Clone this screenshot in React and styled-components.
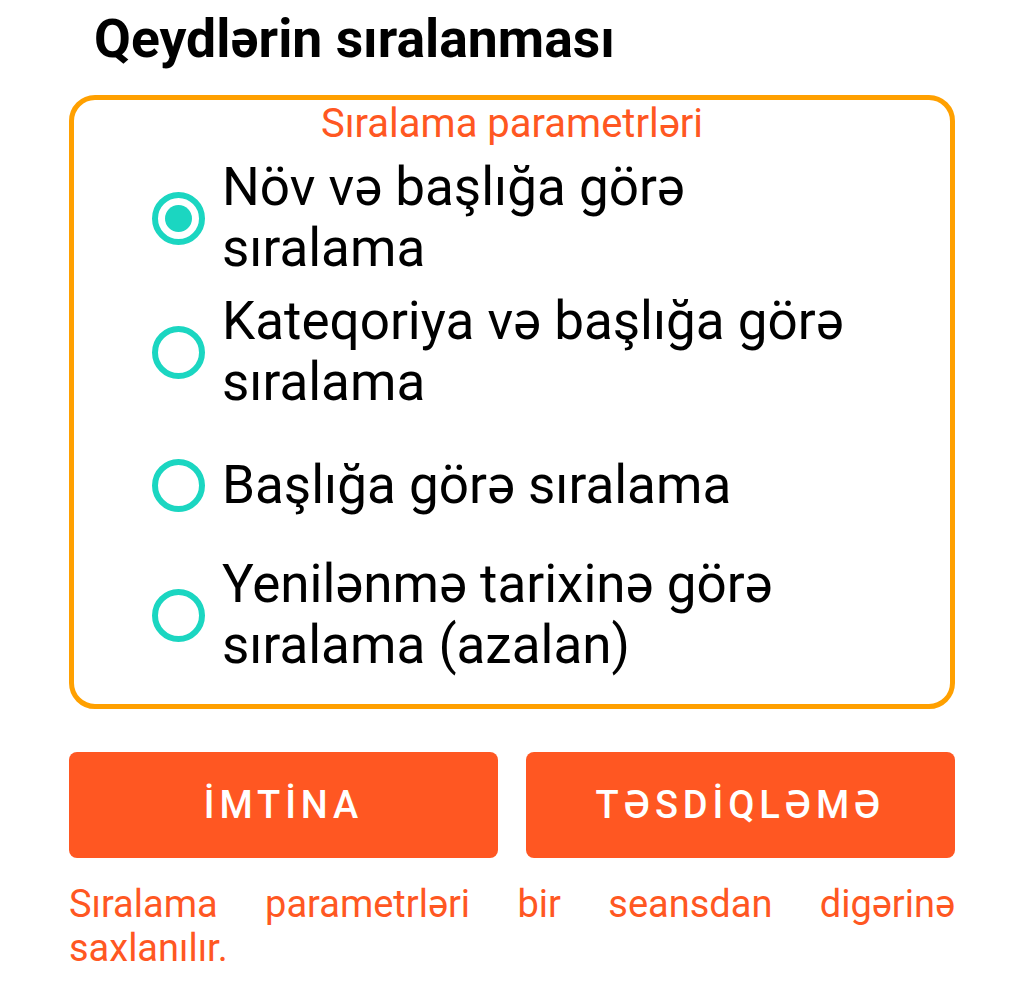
import React, { useState } from "react";
import styled, { createGlobalStyle } from "styled-components";

const Global = createGlobalStyle`
  html, body { margin: 0; padding: 0; background: #ffffff; }
  body { font-family: Roboto, "Noto Sans", sans-serif; }
  * { box-sizing: border-box; }
`;

const Page = styled.div`
  width: 1024px;
  padding: 8px 69px 0 69px;
  display: flex;
  flex-direction: column;
`;

const Title = styled.h1`
  margin: 0 0 26px 25px;
  font-family: Roboto, sans-serif;
  font-weight: 700;
  font-size: 53.5px;
  line-height: 61px;
  color: #000;
`;

const Panel = styled.div`
  border: 5px solid #ffa000;
  border-radius: 26px;
  padding: 1px 88px 25px 78px;
  display: flex;
  flex-direction: column;
`;

const Legend = styled.div`
  font-size: 40px;
  line-height: 46px;
  color: #ff5722;
  text-align: center;
  white-space: nowrap;
  margin: 0 -78px 4px -68px;
`;

const Options = styled.div`
  display: flex;
  flex-direction: column;
`;

const Row = styled.label`
  display: flex;
  align-items: center;
  gap: 17px;
  min-height: ${(p) => p.$h}px;
  cursor: pointer;
`;

const Radio = styled.span`
  flex: none;
  width: 53px;
  height: 53px;
  border-radius: 50%;
  border: 6.5px solid #1bd6c1;
  display: flex;
  align-items: center;
  justify-content: center;
  &::after {
    content: "";
    width: 27px;
    height: 27px;
    border-radius: 50%;
    background: #1bd6c1;
    display: ${(p) => (p.$checked ? "block" : "none")};
  }
`;

const OptionText = styled.span`
  font-size: 53px;
  line-height: 61px;
  color: #000;
`;

const Buttons = styled.div`
  display: grid;
  grid-template-columns: 1fr 1fr;
  gap: 28px;
  margin-top: 43px;
`;

const Button = styled.button`
  height: 106px;
  border: none;
  border-radius: 8px;
  background: #ff5722;
  color: #fff;
  font-family: Roboto, sans-serif;
  font-weight: 500;
  font-size: 38px;
  letter-spacing: 4.9px;
  cursor: pointer;
`;

const Note = styled.p`
  margin: 24px 0 0 0;
  font-size: 38px;
  line-height: 44px;
  color: #ff5722;
  text-align: justify;
`;

const items = [
  { text: "Növ və başlığa görə sıralama", h: 134 },
  { text: "Kateqoriya və başlığa görə sıralama", h: 134 },
  { text: "Başlığa görə sıralama", h: 132 },
  { text: "Yenilənmə tarixinə görə sıralama (azalan)", h: 128 },
];

export default function App() {
  const [sel, setSel] = useState(0);
  return (
    <>
      <Global />
      <Page>
        <Title>Qeydlərin sıralanması</Title>
        <Panel>
          <Legend>Sıralama parametrləri</Legend>
          <Options>
            {items.map((it, i) => (
              <Row key={i} $h={it.h} onClick={() => setSel(i)}>
                <Radio $checked={sel === i} />
                <OptionText>{it.text}</OptionText>
              </Row>
            ))}
          </Options>
        </Panel>
        <Buttons>
          <Button>İMTİNA</Button>
          <Button>TƏSDİQLƏMƏ</Button>
        </Buttons>
        <Note>Sıralama parametrləri bir seansdan digərinə saxlanılır.</Note>
      </Page>
    </>
  );
}
